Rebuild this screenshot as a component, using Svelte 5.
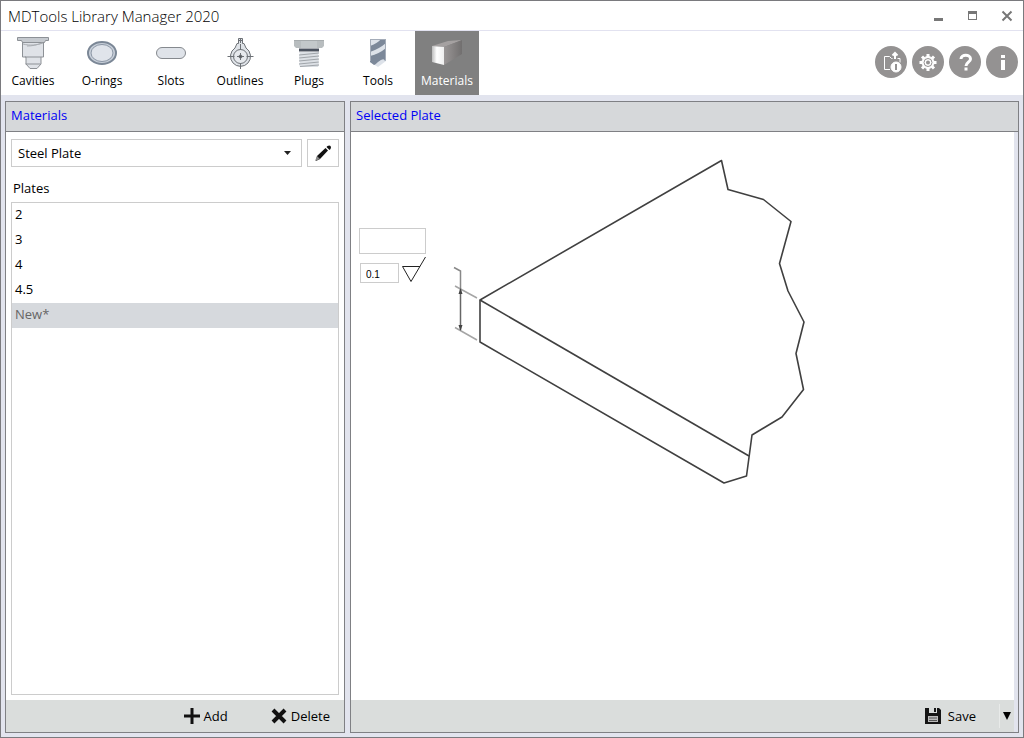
<script>
  const tabs = ["Cavities", "O-rings", "Slots", "Outlines", "Plugs", "Tools", "Materials"];
  const plates = ["2", "3", "4", "4.5", "New*"];

  let activeTab = "Materials";
  let material = "Steel Plate";
  let selectedPlate = "New*";
  let thickness = "";
  let roughness = "0.1";
</script>

<div class="window">
  <header class="titlebar">
    <h1>MDTools Library Manager 2020</h1>
    <div class="window-controls">
      <button type="button" aria-label="Minimize">
        <svg width="12" height="12" viewBox="0 0 12 12"><path d="M1 9.5h9" stroke="#777" stroke-width="3" /></svg>
      </button>
      <button type="button" aria-label="Maximize">
        <svg width="12" height="12" viewBox="0 0 12 12">
          <rect x="1.5" y="2.5" width="8" height="7" fill="none" stroke="#777" />
          <path d="M1 2.5h9" stroke="#777" stroke-width="3" />
        </svg>
      </button>
      <button type="button" aria-label="Close">
        <svg width="12" height="12" viewBox="0 0 12 12"><path d="M1.5 1.5l9 9M10.5 1.5l-9 9" stroke="#777" stroke-width="2" /></svg>
      </button>
    </div>
  </header>

  <div class="toolbar">
    <nav class="tabs">
      {#each tabs as tab}
        <button type="button" class="tab" class:active={tab === activeTab} on:click={() => (activeTab = tab)}>
          <svg width="40" height="34" viewBox="0 0 40 34" aria-hidden="true">
            {#if tab === "Cavities"}
              <g fill="#dfe2e7" stroke="#8d9196">
                <path d="M9.5 5.5h21v15.5h-2.5v7l-4 4.5h-7l-4-4.5v-7h-3.5z" />
                <path d="M4.5 1.5h31v3h-3l-1 2h-22l-1-2h-4z" fill="#c6cacf" />
                <path d="M12 21h16M12.5 28h15" fill="none" />
                <path d="M10 8c7 2 14 1 20-1M14 10c5 0 10-1 15-3" fill="none" stroke="#a9adb2" />
              </g>
            {:else if tab === "O-rings"}
              <ellipse cx="20" cy="17" rx="14" ry="11" fill="#c9d0da" stroke="#7b8796" stroke-width="2" />
              <ellipse cx="20" cy="17" rx="11" ry="8.5" fill="#e0e4eb" stroke="#8b96a5" />
            {:else if tab === "Slots"}
              <rect x="5.5" y="11.5" width="29" height="11" rx="5.5" fill="#dfe3e9" stroke="#85898e" />
            {:else if tab === "Outlines"}
              <g stroke="#6d7176">
                <path d="M18.5 2.5h4v5h1.5l2 4.500a10 10 0 1 1-11 0l2-4.500h1.500z" fill="#dfe3e8" />
                <circle cx="20.5" cy="20.5" r="7" fill="#e6e9ed" />
                <path d="M7.5 20.5h7M17 20.5h7M26.500 20.5h7M20.5 8v6M20.5 17v7M20.5 27v6M20.5 3v4M18.5 4.5h4" fill="none" />
                <circle cx="20.5" cy="20.5" r="1.5" fill="#55595d" />
              </g>
            {:else if tab === "Plugs"}
              <path d="M6 4h28l1 1v5l-2 2H7l-2-2V5z" fill="#b8bdbf" />
              <path d="M12 4h16v8H12z" fill="#c3c8ca" />
              <path d="M5 4.5h30" stroke="#a6abad" />
              <path d="M10 16h20l-1 2 1 2-1 2 1 2-1 2 1 2-1 3H11l-1-3 1-2-1-2 1-2-1-2 1-2z" fill="#dce0e5" />
              <path d="M10 14h20" stroke="#4c535f" stroke-width="3" />
              <path d="M10 19l20-2M10 22l20-2M10 25l20-2M10 28l20-2M11 30.500l19-1.500" stroke="#a0a5aa" />
            {:else if tab === "Tools"}
              <path d="M12 3h16v22l-8 6-8-5z" fill="#dde2e9" />
              <path d="M12 10q8-3 11-7h5v4q-7 6-16 9zM12 20q9-2 16-8v12l-1 1q-1-4-7 1-3 3-4 3l-4-3z" fill="#7c8899" />
              <path d="M12 23q3 0 7-4" fill="none" stroke="#7c8899" stroke-width="2" />
              <path d="M12.5 3v22M27.5 3v21M12 3.500h16" fill="none" stroke="#a4acb8" />
            {:else}
              <defs>
                <linearGradient id="block-front"><stop offset="0" stop-color="#bdbdbd" /><stop offset="0.4" stop-color="#fff" /><stop offset="1" stop-color="#eee" /></linearGradient>
                <linearGradient id="block-side"><stop offset="0" stop-color="#9a9696" /><stop offset="1" stop-color="#716f6f" /></linearGradient>
              </defs>
              <path d="M5 10l16-5 14-1-18 7z" fill="#a5a1a1" />
              <path d="M17 11l18-7v14l-18 11z" fill="url(#block-side)" />
              <path d="M5 10l12 1v18l-12-3z" fill="url(#block-front)" />
            {/if}
          </svg>
          <span>{tab}</span>
        </button>
      {/each}
    </nav>

    <div class="round-buttons">
      <button type="button" aria-label="Open library folder">
        <svg width="32" height="32" viewBox="0 0 32 32" fill="none" stroke="#fff">
          <path d="M15 23.5H9.5v-13h5l2 2h1M22.5 12.5h2.5v4" />
          <path d="M20 13V7M17.5 9.5L20 7l2.5 2.5" stroke-width="2" />
          <circle cx="21" cy="21" r="5" fill="#fff" />
          <path d="M21 18v6" stroke="#949292" stroke-width="2" />
        </svg>
      </button>
      <button type="button" aria-label="Settings">
        <svg width="32" height="32" viewBox="0 0 32 32" fill="none" stroke="#fff">
          <path d="M16 8v3M16 22v3M7.5 16.5h3M21.5 16.5h3M10 10.500l2 2M20 20.500l2 2M22 10.500l-2 2M12 20.500l-2 2" stroke-width="3" />
          <circle cx="16" cy="16.5" r="6" fill="#fff" />
          <circle cx="16" cy="16.5" r="4" stroke="#949292" />
          <circle cx="16" cy="16.5" r="2" fill="#949292" stroke="none" />
        </svg>
      </button>
      <button type="button" aria-label="Help">
        <svg width="32" height="32" viewBox="0 0 32 32" fill="none" stroke="#fff" stroke-width="3">
          <path d="M12 13c0-5 9.5-5 9.5 0 0 3-4.500 3.500-4.500 7M17 21.500v3" />
        </svg>
      </button>
      <button type="button" aria-label="About">
        <svg width="32" height="32" viewBox="0 0 32 32" fill="none" stroke="#fff" stroke-width="4">
          <path d="M17 9v3M17 14v10" />
        </svg>
      </button>
    </div>
  </div>

  <main>
    <section class="panel materials">
      <h2>Materials</h2>
      <div class="panel-body">
        <div class="material-row">
          <div class="combo">
            <select bind:value={material} aria-label="Material">
              <option>Steel Plate</option>
            </select>
            <svg width="8" height="4" viewBox="0 0 8 4"><path d="M0 0h7L3.5 4z" fill="#222" /></svg>
          </div>
          <button type="button" class="edit" aria-label="Edit material">
            <svg width="18" height="18" viewBox="0 0 18 18">
              <path d="M3 12L11.5 4l2.500 2.500L6 15l-4 2z" fill="#111" />
              <path d="M12.5 3l1-1q2-1 3 0t0 3l-1 1z" fill="#111" />
              <path d="M1 17l2-5 3 3z" fill="#888" />
            </svg>
          </button>
        </div>
        <h3 id="plates-label">Plates</h3>
        <ul class="plates" aria-labelledby="plates-label">
          {#each plates as plate}
            <li>
              <button type="button" class:selected={plate === selectedPlate} on:click={() => (selectedPlate = plate)}>{plate}</button>
            </li>
          {/each}
        </ul>
      </div>
      <footer>
        <button type="button">
          <svg width="16" height="16" viewBox="0 0 16 16"><path d="M8 0v16M0 8h16" stroke="#111" stroke-width="3" /></svg>
          Add
        </button>
        <button type="button">
          <svg width="16" height="16" viewBox="0 0 16 16"><path d="M2 2l12 12M14 2L2 14" stroke="#111" stroke-width="4" /></svg>
          Delete
        </button>
      </footer>
    </section>

    <section class="panel plate">
      <h2>Selected Plate</h2>
      <div class="plate-body">
        <div class="canvas">
          <div class="fields">
            <input class="thickness" type="text" aria-label="Thickness" bind:value={thickness} />
            <div class="finish">
              <input type="text" aria-label="Surface roughness" bind:value={roughness} />
              <svg width="26" height="28" viewBox="0 0 26 28"><path d="M19 9.5H1.5L10 24.5 24.5 0" fill="none" stroke="#222" /></svg>
            </div>
          </div>
          <svg class="drawing" width="360" height="335" viewBox="0 0 360 335" role="img" aria-label="Plate drawing">
            <g fill="none" stroke="#404040" stroke-width="1.6" stroke-linejoin="round">
              <path d="M30 145L271.5 5.5L278 34.5L313.5 44.5L341 66.5L329.5 108.5L338 136L354 167L346 198.5L353.5 234.5L332 262L302 280L296.5 321L274 328L30 187z" />
              <path d="M30 145L299 301" />
            </g>
            <g fill="none" stroke="#a5a5a5" stroke-width="1.5">
              <path d="M5 131l22 12M5 172.5L27 185" />
              <path d="M4 112.5l6.5 3.5V134" stroke="#888" />
              <path d="M10.5 134v41" stroke="#666" />
            </g>
            <path d="M10.5 133l2 6h-4zM10.5 176l-2-6h4z" fill="#444" />
          </svg>
        </div>
        <footer>
          <button type="button" class="save">
            <svg width="16" height="16" viewBox="0 0 16 16">
              <path d="M0 0h14l2 2v14H0z" fill="#151515" />
              <path d="M4 0h8v5H4z" fill="#d9dcdb" />
              <path d="M9 0h2v4H9z" fill="#151515" />
              <path d="M3 8h10v6H3z" fill="#bbb" />
              <path d="M4 10h8M4 12.5h8" stroke="#555" />
            </svg>
            Save
          </button>
          <button type="button" class="save-more" aria-label="More save options">
            <svg width="8" height="8" viewBox="0 0 8 8"><path d="M0 0h8L4 8z" fill="#000" /></svg>
          </button>
        </footer>
      </div>
    </section>
  </main>
</div>

<style>
  :global(body) {
    margin: 0;
  }

  .window {
    display: flex;
    flex-direction: column;
    min-height: 100vh;
    box-sizing: border-box;
    border: 1px solid #7a7a7e;
    background: #e2e4ee;
    font-family: "Open Sans", "Noto Sans", sans-serif;
    font-size: 13px;
    line-height: 18px;
    color: #000;
  }

  button,
  input,
  select {
    font: inherit;
    color: inherit;
    box-sizing: border-box;
    border-radius: 0;
  }

  button {
    padding: 0;
    border: none;
    background: none;
    cursor: pointer;
  }

  svg {
    display: block;
    flex: none;
  }

  h1,
  h2,
  h3,
  ul {
    margin: 0;
    padding: 0;
    font-weight: 400;
  }

  .titlebar {
    display: flex;
    align-items: center;
    justify-content: space-between;
    height: 29px;
    padding: 0 10px 0 7px;
    border-bottom: 1px solid #e2e2f0;
    background: #fff;
  }

  h1 {
    font-size: 15px;
    font-weight: 300;
    line-height: 20px;
  }

  .window-controls {
    display: flex;
    gap: 22px;
  }

  .toolbar {
    display: flex;
    align-items: center;
    justify-content: space-between;
    padding-right: 5px;
    background: #fff;
  }

  .tabs {
    display: flex;
    gap: 5px;
  }

  .tab {
    display: flex;
    flex-direction: column;
    align-items: center;
    gap: 3px;
    width: 64px;
    height: 64px;
    padding-top: 5px;
    font-size: 12px;
    line-height: 16px;
  }

  .tab.active {
    background: #808080;
    color: #fff;
  }

  .round-buttons {
    display: flex;
    gap: 5px;
    padding-bottom: 2px;
  }

  .round-buttons button {
    width: 32px;
    height: 32px;
    border-radius: 50%;
    background: #949292;
  }

  main {
    display: flex;
    flex: 1;
    gap: 5px;
    padding: 6px 4px 4px;
  }

  .panel {
    display: flex;
    flex-direction: column;
    box-sizing: border-box;
    border: 1px solid #7f8084;
  }

  .materials {
    flex: none;
    width: 340px;
    background: #fff;
  }

  .plate {
    flex: 1;
    min-width: 0;
  }

  h2 {
    padding: 4px 5px 7px;
    border-bottom: 1px solid #7f8084;
    background: #d6d8da;
    color: #0000f5;
    font-size: 13px;
    line-height: 18px;
  }

  .panel-body {
    display: flex;
    flex: 1;
    flex-direction: column;
    padding: 7px 5px 5px;
  }

  .material-row {
    display: flex;
    gap: 5px;
  }

  .combo {
    position: relative;
    flex: 1;
  }

  .combo select {
    display: block;
    width: 100%;
    height: 28px;
    padding: 0 6px;
    border: 1px solid #ccc;
    background: #fff;
    appearance: none;
  }

  .combo svg {
    position: absolute;
    top: 12px;
    right: 10px;
    pointer-events: none;
  }

  .edit {
    display: flex;
    align-items: center;
    justify-content: center;
    width: 32px;
    height: 28px;
    border: 1px solid #ccc;
  }

  h3 {
    padding: 12px 2px 5px;
    font-size: 13px;
    line-height: 18px;
  }

  .plates {
    flex: 1;
    border: 1px solid #ccc;
    list-style: none;
  }

  .plates button {
    display: block;
    width: 100%;
    height: 25px;
    padding: 0 3px 4px;
    text-align: left;
  }

  .plates .selected {
    background: #d6d9dd;
    color: #666;
  }

  footer {
    display: flex;
    align-items: center;
    justify-content: flex-end;
    height: 32px;
    background: #dadddc;
  }

  footer button {
    display: flex;
    align-items: center;
    gap: 4px;
  }

  .materials footer {
    gap: 43px;
    padding-right: 14px;
  }

  .plate-body {
    display: flex;
    flex: 1;
    flex-direction: column;
    padding-right: 4px;
  }

  .canvas {
    display: flex;
    flex: 1;
    align-items: flex-start;
    gap: 23px;
    padding: 23px 8px;
    background: #fff;
  }

  .fields {
    padding-top: 73px;
  }

  .fields input {
    display: block;
    border: 1px solid #ccc;
    background: #fff;
  }

  .thickness {
    width: 67px;
    height: 26px;
  }

  .finish {
    display: flex;
    align-items: center;
    gap: 2px;
    padding: 3px 0 0 1px;
  }

  .finish input {
    width: 39px;
    height: 20px;
    margin-top: 4px;
    padding: 2px 5px 0;
    font-family: "Liberation Sans", Arial, sans-serif;
    font-size: 10px;
  }

  .save {
    gap: 7px;
    margin-right: 23px;
  }

  .save-more {
    height: 24px;
    padding: 0 3px;
    border-left: 1px solid #e8eae9;
  }
</style>
